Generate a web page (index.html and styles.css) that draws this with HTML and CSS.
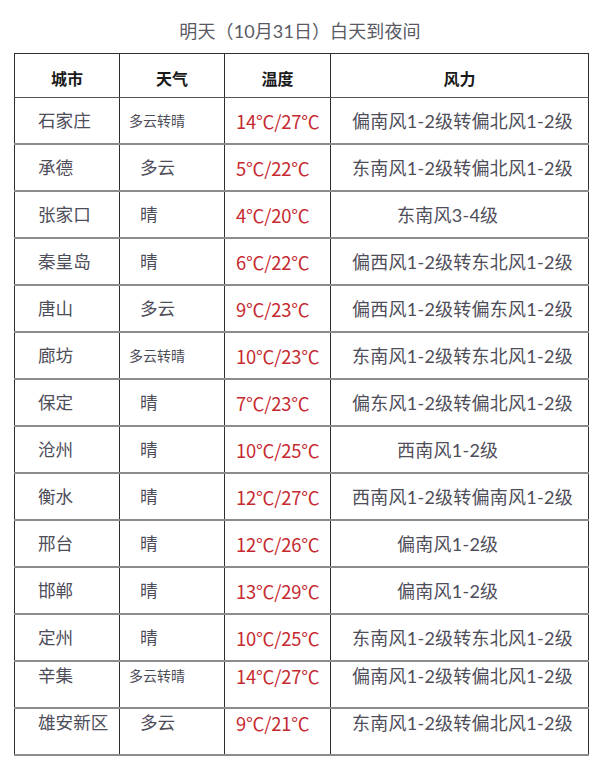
FILE: index.html
```html
<!DOCTYPE html>
<html lang="zh-CN">
<head>
<meta charset="utf-8">
<title>明天（10月31日）白天到夜间</title>
<link rel="stylesheet" href="styles.css">
</head>
<body>
<div class="page">
  <h1 class="title">明天（10月31日）白天到夜间</h1>
  <table class="wx">
    <colgroup>
      <col class="c-city"><col class="c-weather"><col class="c-temp"><col class="c-wind">
    </colgroup>
    <thead>
      <tr><th>城市</th><th>天气</th><th>温度</th><th>风力</th></tr>
    </thead>
    <tbody>
      <tr><td class="city">石家庄</td><td class="wsm">多云转晴</td><td class="temp">14℃/27℃</td><td class="wind">偏南风1-2级转偏北风1-2级</td></tr>
      <tr><td class="city">承德</td><td class="wbig">多云</td><td class="temp">5℃/22℃</td><td class="wind">东南风1-2级转偏北风1-2级</td></tr>
      <tr><td class="city">张家口</td><td class="wbig">晴</td><td class="temp">4℃/20℃</td><td class="wind short">东南风3-4级</td></tr>
      <tr><td class="city">秦皇岛</td><td class="wbig">晴</td><td class="temp">6℃/22℃</td><td class="wind">偏西风1-2级转东北风1-2级</td></tr>
      <tr><td class="city">唐山</td><td class="wbig">多云</td><td class="temp">9℃/23℃</td><td class="wind">偏西风1-2级转偏东风1-2级</td></tr>
      <tr><td class="city">廊坊</td><td class="wsm">多云转晴</td><td class="temp">10℃/23℃</td><td class="wind">东南风1-2级转东北风1-2级</td></tr>
      <tr><td class="city">保定</td><td class="wbig">晴</td><td class="temp">7℃/23℃</td><td class="wind">偏东风1-2级转偏北风1-2级</td></tr>
      <tr><td class="city">沧州</td><td class="wbig">晴</td><td class="temp">10℃/25℃</td><td class="wind short">西南风1-2级</td></tr>
      <tr><td class="city">衡水</td><td class="wbig">晴</td><td class="temp">12℃/27℃</td><td class="wind">西南风1-2级转偏南风1-2级</td></tr>
      <tr><td class="city">邢台</td><td class="wbig">晴</td><td class="temp">12℃/26℃</td><td class="wind short">偏南风1-2级</td></tr>
      <tr><td class="city">邯郸</td><td class="wbig">晴</td><td class="temp">13℃/29℃</td><td class="wind short">偏南风1-2级</td></tr>
      <tr><td class="city">定州</td><td class="wbig">晴</td><td class="temp">10℃/25℃</td><td class="wind">东南风1-2级转东北风1-2级</td></tr>
      <tr class="top"><td class="city">辛集</td><td class="wsm">多云转晴</td><td class="temp">14℃/27℃</td><td class="wind">偏南风1-2级转偏北风1-2级</td></tr>
      <tr class="top last"><td class="city">雄安新区</td><td class="wbig">多云</td><td class="temp">9℃/21℃</td><td class="wind">东南风1-2级转偏北风1-2级</td></tr>
    </tbody>
  </table>
</div>
</body>
</html>
```

FILE: styles.css
```css
html, body {
  margin: 0;
  padding: 0;
  background: #ffffff;
}

body {
  font-family: "Lato", "Noto Sans CJK SC", "Noto Sans", sans-serif;
  color: #4e4d5a;
}

.page {
  width: 600px;
  padding-top: 18px;
}

.title {
  margin: 0 0 8px 0;
  height: 27px;
  line-height: 27px;
  text-align: center;
  font-size: 18px;
  font-weight: normal;
  color: #5a5a64;
  letter-spacing: 0.1px;
}

.wx {
  margin-left: 14px;
  border-collapse: collapse;
  table-layout: fixed;
  width: 574px;
}

.c-city { width: 105px; }
.c-weather { width: 105px; }
.c-temp { width: 106px; }
.c-wind { width: 258px; }

.wx th {
  height: 39px;
  padding: 4px 0 0 0;
  font-family: "Noto Sans CJK SC", sans-serif;
  font-size: 16px;
  font-weight: bold;
  color: #1a1a1a;
  text-align: center;
  border: 1px solid #2e2e2e;
  border-bottom: 1.5px solid #555;
}

.wx td {
  height: 45px;
  padding: 0;
  font-size: 17.6px;
  line-height: 24px;
  white-space: nowrap;
  border-left: 1px solid #2e2e2e;
  border-right: 1px solid #2e2e2e;
  border-bottom: 2px solid #8c8c8c;
  vertical-align: middle;
}

.wx td.city { padding-left: 23px; }
.wx td.wsm { padding-left: 9px; font-size: 14px; }
.wx td.wbig { padding-left: 20px; }
.wx td.temp {
  padding-left: 11px;
  color: #c62a30;
  font-family: "Noto Sans CJK SC", sans-serif;
  font-size: 18.4px;
  letter-spacing: -0.2px;
}
.wx td.wind { padding-left: 21px; font-size: 18px; letter-spacing: 0.25px; }
.wx td.wind.short { padding-left: 66px; }

.wx tr.top td {
  vertical-align: top;
  padding-top: 2px;
  height: 43px;
}
```
